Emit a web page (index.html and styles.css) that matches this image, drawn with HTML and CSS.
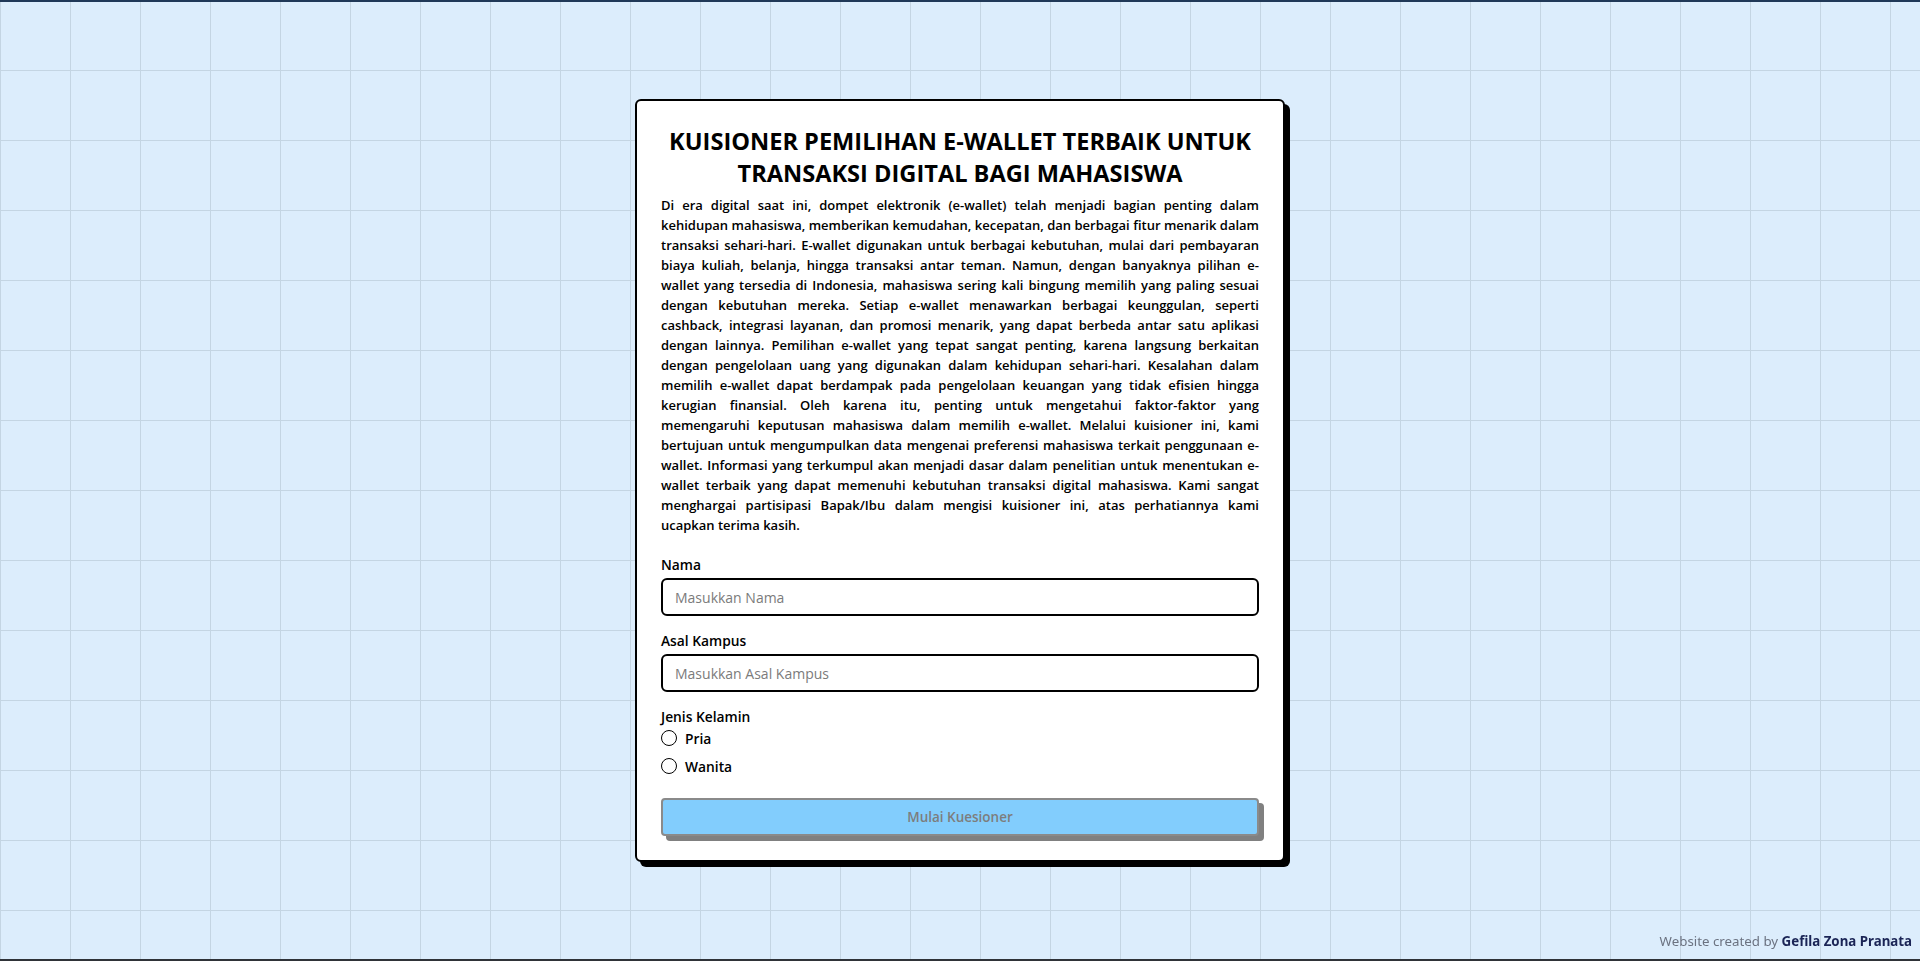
FILE: index.html
```html
<!DOCTYPE html>
<html lang="id">
<head>
<meta charset="utf-8">
<title>Kuisioner E-Wallet</title>
<link rel="stylesheet" href="styles.css">
</head>
<body>
<main class="page">
  <section class="card">
    <h1 class="title">KUISIONER PEMILIHAN E-WALLET TERBAIK UNTUK<br>TRANSAKSI DIGITAL BAGI MAHASISWA</h1>
    <p class="intro">
      <span class="ln">Di era digital saat ini, dompet elektronik (e-wallet) telah menjadi bagian penting dalam</span>
      <span class="ln">kehidupan mahasiswa, memberikan kemudahan, kecepatan, dan berbagai fitur menarik dalam</span>
      <span class="ln">transaksi sehari-hari. E-wallet digunakan untuk berbagai kebutuhan, mulai dari pembayaran</span>
      <span class="ln">biaya kuliah, belanja, hingga transaksi antar teman. Namun, dengan banyaknya pilihan e-</span>
      <span class="ln">wallet yang tersedia di Indonesia, mahasiswa sering kali bingung memilih yang paling sesuai</span>
      <span class="ln">dengan kebutuhan mereka. Setiap e-wallet menawarkan berbagai keunggulan, seperti</span>
      <span class="ln">cashback, integrasi layanan, dan promosi menarik, yang dapat berbeda antar satu aplikasi</span>
      <span class="ln">dengan lainnya. Pemilihan e-wallet yang tepat sangat penting, karena langsung berkaitan</span>
      <span class="ln">dengan pengelolaan uang yang digunakan dalam kehidupan sehari-hari. Kesalahan dalam</span>
      <span class="ln">memilih e-wallet dapat berdampak pada pengelolaan keuangan yang tidak efisien hingga</span>
      <span class="ln">kerugian finansial. Oleh karena itu, penting untuk mengetahui faktor-faktor yang</span>
      <span class="ln">memengaruhi keputusan mahasiswa dalam memilih e-wallet. Melalui kuisioner ini, kami</span>
      <span class="ln">bertujuan untuk mengumpulkan data mengenai preferensi mahasiswa terkait penggunaan e-</span>
      <span class="ln">wallet. Informasi yang terkumpul akan menjadi dasar dalam penelitian untuk menentukan e-</span>
      <span class="ln">wallet terbaik yang dapat memenuhi kebutuhan transaksi digital mahasiswa. Kami sangat</span>
      <span class="ln">menghargai partisipasi Bapak/Ibu dalam mengisi kuisioner ini, atas perhatiannya kami</span>
      <span class="ln ln-end">ucapkan terima kasih.</span>
    </p>
    <form class="form">
      <div class="field">
        <label class="label" for="nama">Nama</label>
        <input class="input" id="nama" type="text" placeholder="Masukkan Nama">
      </div>
      <div class="field">
        <label class="label" for="kampus">Asal Kampus</label>
        <input class="input" id="kampus" type="text" placeholder="Masukkan Asal Kampus">
      </div>
      <div class="field field-radio">
        <span class="label label-group">Jenis Kelamin</span>
        <div class="radios">
          <label class="radio"><input type="radio" name="jk" value="pria"><span>Pria</span></label>
          <label class="radio"><input type="radio" name="jk" value="wanita"><span>Wanita</span></label>
        </div>
      </div>
      <button class="btn" type="button" disabled>Mulai Kuesioner</button>
    </form>
  </section>
</main>
<footer class="credit">Website created by <strong>Gefila Zona Pranata</strong></footer>
</body>
</html>
```

FILE: styles.css
```css
* { box-sizing: border-box; }

html, body { margin: 0; padding: 0; }

body {
  font-family: "Open Sans", "Noto Sans", sans-serif;
  color: #000;
  background-color: #dcedfc;
  background-image:
    linear-gradient(to right, #c4d5e3 1px, transparent 1px),
    linear-gradient(to bottom, #c4d5e3 1px, transparent 1px);
  background-size: 70px 70px;
  border-top: 2px solid #1f3858;
  border-bottom: 2px solid #2f3338;
  min-height: 961px;
}

.page {
  min-height: 957px;
  display: flex;
  align-items: center;
  justify-content: center;
}

.card {
  width: 650px;
  background: #fff;
  border: 2px solid #000;
  border-radius: 6px;
  box-shadow: 5px 5px 0 #000;
  padding: 24px;
}

.title {
  margin: 0 0 6px;
  font-size: 23.6px;
  line-height: 32px;
  font-weight: 700;
  text-align: center;
}

.intro {
  margin: 0;
  font-size: 13px;
  line-height: 20px;
  font-weight: 600;
}

.intro .ln {
  display: block;
  text-align: justify;
  text-align-last: justify;
}

.intro .ln-end { text-align-last: left; }

.form { margin-top: 20px; }

.field { margin-bottom: 15px; }

.label {
  display: block;
  font-size: 13.8px;
  line-height: 20px;
  font-weight: 600;
  margin-bottom: 3px;
}

.label-group { margin-bottom: 1px; }

.input {
  display: block;
  width: 100%;
  height: 38px;
  border: 2px solid #000;
  border-radius: 6px;
  padding: 0 12px;
  font-family: inherit;
  font-size: 14px;
  color: #000;
  background: #fff;
  outline: none;
}

.input::placeholder { color: #7b7b7b; }

.radios {
  display: flex;
  flex-direction: column;
  gap: 8px;
}

.radio {
  display: flex;
  align-items: center;
  gap: 8px;
  height: 20px;
  font-size: 13.8px;
  font-weight: 600;
}

.radio input {
  appearance: none;
  -webkit-appearance: none;
  width: 16px;
  height: 16px;
  margin: 0;
  border: 1.5px solid #000;
  border-radius: 50%;
  background: #fff;
}

.field-radio { margin-bottom: 22px; }

.btn {
  display: block;
  width: 100%;
  height: 38px;
  background: #82cdfd;
  border: 2px solid #8a8a8a;
  border-radius: 4px;
  box-shadow: 5px 5px 0 #808080;
  font-family: inherit;
  font-size: 13.5px;
  font-weight: 600;
  color: #7d7d7d;
}

.credit {
  position: fixed;
  right: 8px;
  bottom: 10px;
  font-family: "Noto Sans", "Open Sans", sans-serif;
  font-size: 13.3px;
  line-height: 19px;
  color: #6b7280;
}

.credit strong {
  color: #1b2556;
  font-weight: 700;
}
```
